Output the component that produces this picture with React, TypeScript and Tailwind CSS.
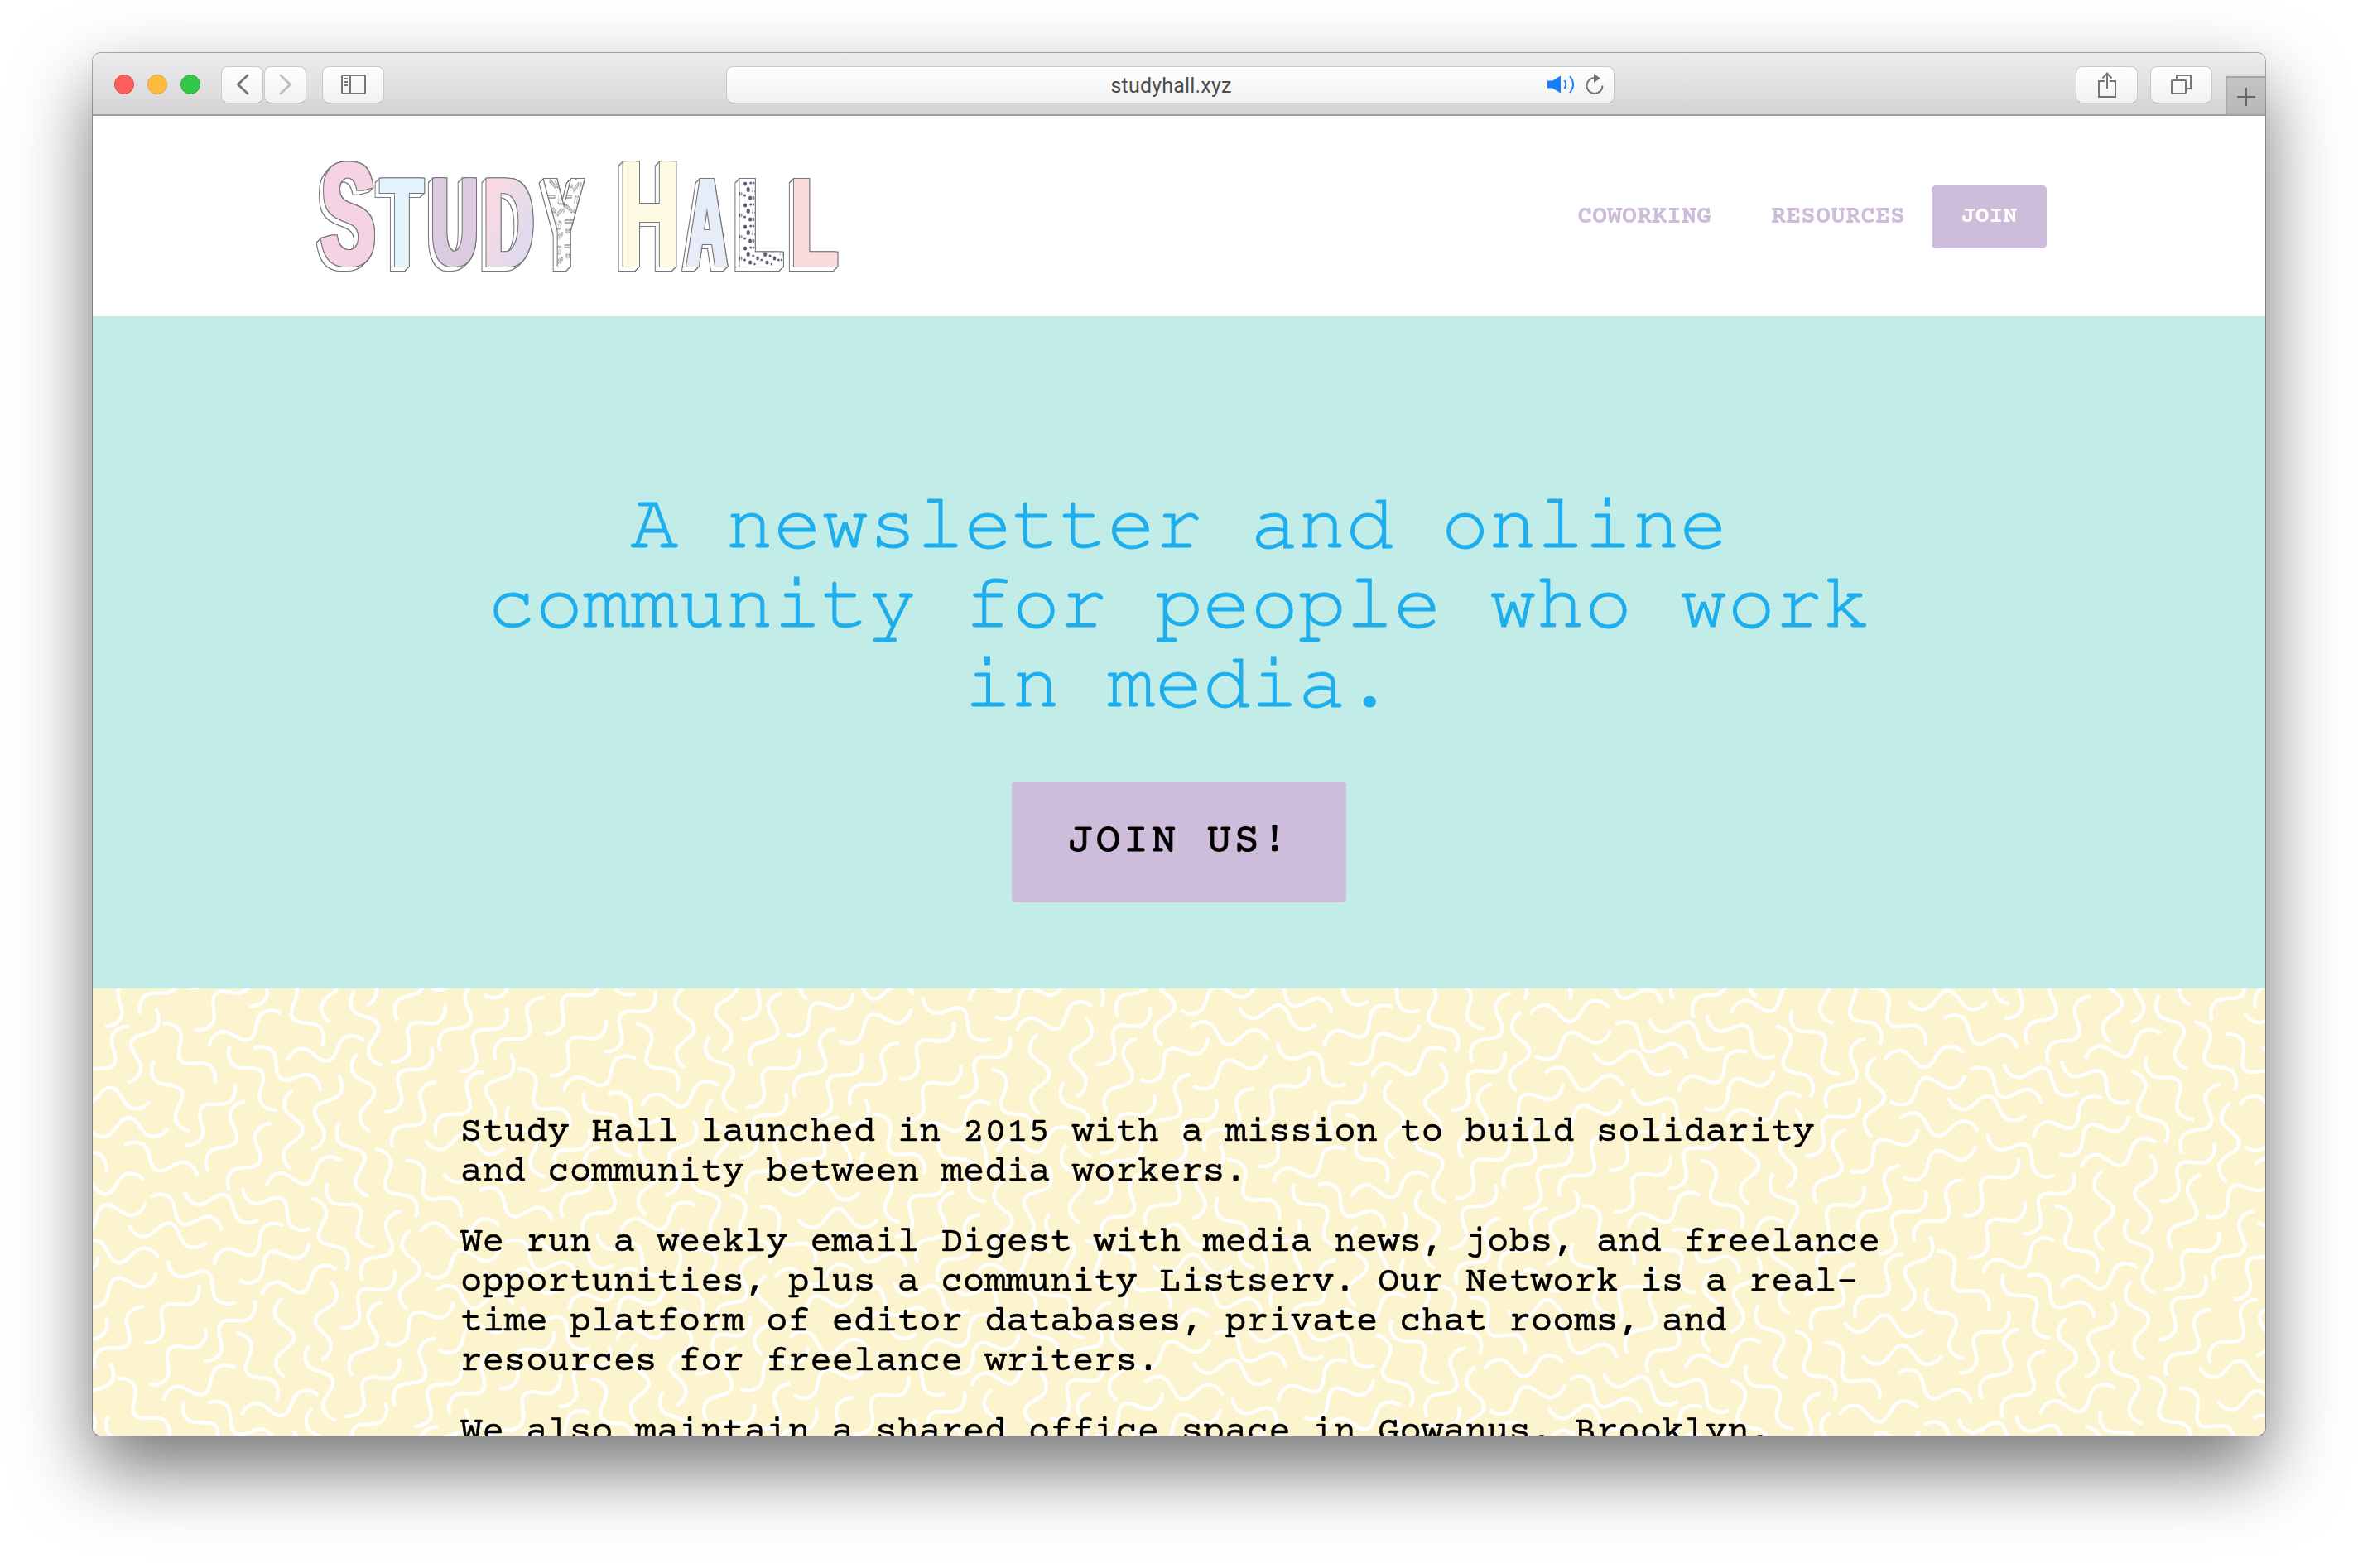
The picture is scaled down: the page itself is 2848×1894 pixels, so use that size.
import React from "react";

type Squiggle = [number, number, number, number];

/* Each entry is the chord of one squiggle: start x, y and end x, y. */
const CHORDS: Squiggle[] = [
  [292, 83, 562, 83], [660, 243, 415, 140], [350, 228, 165, 40], [1397, 384, 1262, 153],
  [480, 258, 215, 280], [150, 210, 20, 443], [183, 273, 170, 540], [233, 420, 485, 333],
  [530, 523, 265, 480], [743, 430, 503, 315], [617, 295, 868, 390], [813, 283, 1042, 421],
  [430, 410, 690, 468], [950, 410, 717, 543], [803, 598, 1040, 470], [560, 530, 790, 671],
  [98, 655, 325, 515], [275, 677, 522, 570], [1147, 192, 893, 277], [1132, 560, 878, 645],
  [910, 66, 768, 292], [668, 1190, 543, 1428], [829, 1155, 824, 1420], [891, 1355, 984, 1102],
  [1143, 63, 1240, 311], [1100, 268, 1260, 482], [1163, 562, 1047, 320], [1349, 364, 1220, 598],
  [1383, 427, 1370, 693], [1080, 868, 1110, 600], [1145, 758, 1328, 562], [1283, 671, 1185, 918],
  [948, 658, 955, 923], [480, 808, 666, 612], [480, 687, 315, 895], [265, 638, 130, 868],
  [1160, 1056, 1343, 861], [193, 938, 352, 720], [682, 868, 853, 665], [498, 948, 688, 760],
  [928, 1004, 790, 774], [788, 893, 547, 1003], [1070, 985, 810, 1052], [1037, 818, 1130, 1070],
  [270, 1127, 365, 877], [565, 1130, 390, 927], [275, 938, 115, 1152], [1315, 1126, 1168, 1348],
  [360, 1055, 482, 1291], [615, 1005, 775, 1221], [922, 1155, 697, 1012], [1048, 1030, 1092, 1293],
  [1140, 1227, 1297, 1010], [1465, 793, 1330, 1023], [1475, 1092, 1315, 1306], [78, 1168, 345, 1193],
  [138, 1283, 407, 1281], [195, 1427, 8, 1238], [465, 1340, 632, 1130], [507, 1445, 260, 1340],
  [327, 1458, 60, 1478], [993, 1392, 740, 1478], [990, 1262, 1088, 1510],
];

const UNIT = 2.8;
const STEP_X = 428.5;
const STEP_Y = 55;
const SPAN = STEP_X * STEP_X + STEP_Y * STEP_Y;

const fold = (v: number) => v - Math.round(v);

const TILE = CHORDS.map(([x1, y1, x2, y2]) => {
  const ax = 2088 + x1 / UNIT;
  const ay = y1 / UNIT - 14;
  const bx = 2088 + x2 / UNIT;
  const by = y2 / UNIT - 14;
  const cx = (ax + bx) / 2;
  const cy = (ay + by) / 2;
  return {
    cx,
    cy,
    angle: (Math.atan2(by - ay, bx - ax) * 180) / Math.PI,
    u: (cx * STEP_X + cy * STEP_Y) / SPAN,
    v: (-cx * STEP_Y + cy * STEP_X) / SPAN,
  };
}).filter(
  (s, i, all) =>
    !all.slice(0, i).some((o) => Math.hypot(fold(o.u - s.u), fold(o.v - s.v)) < 0.035),
);

function Squiggles() {
  const marks: React.ReactNode[] = [];
  for (let i = -7; i <= 3; i++) {
    for (let j = -4; j <= 4; j++) {
      TILE.forEach((s, k) => {
        const x = s.cx + i * STEP_X - j * STEP_Y;
        const y = s.cy + i * STEP_Y + j * STEP_X;
        if (x < -60 || x > 2690 || y < -60 || y > 600) return;
        marks.push(
          <use
            key={`${i}.${j}.${k}`}
            href="#squiggle"
            transform={`translate(${x.toFixed(1)} ${y.toFixed(1)}) rotate(${s.angle.toFixed(1)})`}
          />,
        );
      });
    }
  }
  return (
    <svg className="absolute inset-0 h-full w-full" viewBox="0 0 2624 540" aria-hidden="true">
      <defs>
        <path
          id="squiggle"
          d="M-47.7 0C-43.5 6-37 9.8-30 9.8C-16 9.8-12.500-12.9 0-12.900C12.500-12.900 16 9.800 30 9.800C37 9.800 43.500 6 47.700 0"
          fill="none"
          stroke="#fff"
          strokeWidth="4.300"
        />
      </defs>
      {marks}
    </svg>
  );
}

const LETTERS = [
  { ch: "S", x: 420, y: 320, size: 178, sx: 0.555, fill: "#f6d3e4" },
  { ch: "T", x: 485, y: 322, size: 154, sx: 0.535, fill: "#e2f3fc" },
  { ch: "U", x: 548.5, y: 321, size: 152, sx: 0.515, fill: "#dccae1" },
  { ch: "D", x: 614, y: 322, size: 154, sx: 0.54, fill: "url(#dFill)" },
  { ch: "Y", x: 680.5, y: 322, size: 154, sx: 0.45, fill: "url(#sprinkles)" },
  { ch: "H", x: 784, y: 322, size: 184.5, sx: 0.54, fill: "#fefae3" },
  { ch: "A", x: 853.5, y: 322, size: 154, sx: 0.43, fill: "#e6edf8" },
  { ch: "L", x: 917.5, y: 322, size: 154, sx: 0.6, fill: "url(#terrazzo)" },
  { ch: "L", x: 983, y: 322, size: 154, sx: 0.6, fill: "#fadadd" },
];

function Logo() {
  return (
    <svg className="h-[242px] w-[660px]" viewBox="370 140 660 242" role="img" aria-label="Study Hall">
      <defs>
        <linearGradient id="dFill" x1="0" y1="0" x2="1" y2="1">
          <stop offset="0.2" stopColor="#fbd9e3" />
          <stop offset="0.9" stopColor="#d9dbf0" />
        </linearGradient>
        <pattern id="sprinkles" width="44" height="30" patternUnits="userSpaceOnUse">
          <rect width="44" height="30" fill="#fff" />
          <g fill="#fff" stroke="#777" strokeWidth="1.200">
            <rect x="4" y="4" width="18" height="3" />
            <rect x="30" y="5" width="6" height="9" transform="rotate(20 32 12)" />
            <rect x="6" y="18" width="18" height="3" transform="rotate(25 14 21)" />
            <rect x="26" y="22" width="16" height="3" transform="rotate(-30 35 23)" />
          </g>
        </pattern>
        <pattern id="terrazzo" width="34" height="26" patternUnits="userSpaceOnUse">
          <rect width="34" height="26" fill="#fff" />
          <g fill="#5b5872">
            <ellipse cx="5" cy="4" rx="3.500" ry="2.500" />
            <ellipse cx="16" cy="3" rx="2.500" ry="1.500" />
            <ellipse cx="27" cy="6" rx="3.500" ry="2.500" />
            <ellipse cx="11" cy="11" rx="3.500" ry="3" />
            <ellipse cx="21" cy="13" rx="2.500" ry="1.500" />
            <ellipse cx="30" cy="16" rx="3" ry="2.500" />
            <ellipse cx="4" cy="18" rx="2.500" ry="1.500" />
            <ellipse cx="15" cy="21" rx="3.500" ry="2.500" />
            <ellipse cx="24" cy="23" rx="2" ry="1.500" />
          </g>
        </pattern>
        <filter id="extrude" x="370" y="140" width="660" height="242" filterUnits="userSpaceOnUse" colorInterpolationFilters="sRGB">
          <feOffset in="SourceGraphic" dx="-2.500" dy="0" result="wideLeft" />
          <feOffset in="SourceGraphic" dx="2.500" dy="0" result="wideRight" />
          <feMerge result="face">
            <feMergeNode in="wideLeft" />
            <feMergeNode in="wideRight" />
            <feMergeNode in="SourceGraphic" />
          </feMerge>
          <feOffset in="face" dx="-1" dy="1" result="a" />
          <feOffset in="face" dx="-2" dy="2" result="b" />
          <feOffset in="face" dx="-3" dy="3" result="c" />
          <feOffset in="face" dx="-4" dy="4" result="d" />
          <feOffset in="face" dx="-5" dy="5" result="e" />
          <feMerge result="body">
            <feMergeNode in="face" />
            <feMergeNode in="a" />
            <feMergeNode in="b" />
            <feMergeNode in="c" />
            <feMergeNode in="d" />
            <feMergeNode in="e" />
          </feMerge>
          <feMorphology in="body" operator="dilate" radius="1" result="bodyWide" />
          <feMorphology in="face" operator="dilate" radius="1" result="faceWide" />
          <feFlood floodColor="#777" result="ink" />
          <feComposite in="ink" in2="bodyWide" operator="in" result="bodyLine" />
          <feComposite in="ink" in2="faceWide" operator="in" result="faceLine" />
          <feFlood floodColor="#fff" result="paper" />
          <feComposite in="paper" in2="body" operator="in" result="side" />
          <feMerge>
            <feMergeNode in="bodyLine" />
            <feMergeNode in="side" />
            <feMergeNode in="faceLine" />
            <feMergeNode in="face" />
          </feMerge>
        </filter>
      </defs>
      <g filter="url(#extrude)" className="font-['Liberation_Sans',sans-serif] font-bold" textAnchor="middle">
        {LETTERS.map((l, i) => (
          <text key={i} transform={`translate(${l.x} ${l.y}) scale(${l.sx} 1)`} fontSize={l.size} fill={l.fill}>
            {l.ch}
          </text>
        ))}
      </g>
    </svg>
  );
}

const BUTTON =
  "flex h-[45px] items-center justify-center rounded-[8px] border border-[#cbc9cc] border-b-[#a9a7aa] bg-linear-to-b from-white to-[#f1f1f1]";

function Toolbar() {
  return (
    <div className="relative flex h-[76px] shrink-0 items-start border-b-2 border-[#a09ea1] bg-linear-to-b from-[#eeecef] to-[#d5d3d6] pt-[15.500px] pl-[26px]">
      <div className="flex h-[45px] items-center gap-4">
        <div className="size-6 rounded-full border border-[#e0443e] bg-[#fc615d]" />
        <div className="size-6 rounded-full border border-[#dea034] bg-[#fdbc40]" />
        <div className="size-6 rounded-full border border-[#27aa35] bg-[#34c84a]" />
      </div>
      <div className="ml-[25px] flex gap-px">
        <div className={`${BUTTON} w-[51px]`}>
          <svg className="h-[26px] w-4" viewBox="0 0 16 26" fill="none" stroke="#757575" strokeWidth="2.800" strokeLinecap="round">
            <path d="M14 2L2.500 13L14 24" />
          </svg>
        </div>
        <div className={`${BUTTON} w-[51px]`}>
          <svg className="h-[26px] w-4" viewBox="0 0 16 26" fill="none" stroke="#bdbdbd" strokeWidth="2.800" strokeLinecap="round">
            <path d="M2 2L13.500 13L2 24" />
          </svg>
        </div>
      </div>
      <div className={`${BUTTON} ml-[19px] w-[75px]`}>
        <svg className="h-6 w-[30px]" viewBox="0 0 30 24" fill="none" stroke="#757575" strokeWidth="2">
          <rect x="1" y="1" width="28" height="22" rx="1" />
          <path d="M11 1V23M4 5H8M4 9H8M4 13H8" />
        </svg>
      </div>
      <div className={`${BUTTON} relative ml-[413px] w-[1073px]`}>
        <span className="pt-0.5 pl-0.5 font-['Roboto',sans-serif] text-[25px] leading-none tracking-[0.200px] text-[#4c4c4c]">
          studyhall.xyz
        </span>
        <div className="absolute top-0 right-[11px] flex h-full items-center gap-3">
          <svg className="h-[26px] w-[33px]" viewBox="0 0 33 26" fill="none" stroke="#157efb" strokeWidth="2">
            <path d="M0 8.500H6L16 2.500V23.500L6 17.500H0Z" fill="#157efb" stroke="none" />
            <path d="M20.500 8Q24 13 20.500 18M27 3Q35 13 27 23" />
          </svg>
          <svg className="h-[26px] w-6" viewBox="0 0 24 26" fill="none" stroke="#757575" strokeWidth="2">
            <path d="M12 5A9.500 9.500 0 1 0 21.500 14.500" />
            <path d="M11 0L19 5.500L11 11Z" fill="#757575" stroke="none" />
          </svg>
        </div>
      </div>
      <div className={`${BUTTON} ml-[557px] w-[75px]`}>
        <svg className="h-[31px] w-6" viewBox="0 0 24 31" fill="none" stroke="#757575" strokeWidth="2">
          <path d="M9 11H2V30H22V11H15M12 20V2M6.500 7.500L12 1.500L17.500 7.500" />
        </svg>
      </div>
      <div className={`${BUTTON} ml-[15px] w-[75px]`}>
        <svg className="h-6 w-[26px]" viewBox="0 0 26 24" fill="none" stroke="#757575" strokeWidth="2">
          <rect x="1" y="7" width="17" height="16" rx="1" />
          <path d="M7 5V1H24V17H20" />
        </svg>
      </div>
      <div className="absolute right-0 bottom-0 flex h-[46px] w-12 items-center justify-center border-t-2 border-l-2 border-[#a5a3a6] bg-linear-to-b from-[#c6c4c7] to-[#b8b6b9] pt-0.5">
        <svg className="size-[22px]" viewBox="0 0 22 22" stroke="#666" strokeWidth="2">
          <path d="M11 0V22M0 11H22" />
        </svg>
      </div>
    </div>
  );
}

export default function App() {
  return (
    <div className="flex h-[1894px] w-[2848px] justify-center overflow-hidden bg-white pt-16 font-['Courier_Prime','Liberation_Mono',monospace]">
      <div className="h-[1670px] w-[2624px] rounded-[10px] shadow-[0_0_0_1px_rgba(0,0,0,0.3),0_40px_90px_rgba(0,0,0,0.55)]">
        <div className="flex h-full w-full flex-col overflow-hidden rounded-[10px] bg-white">
          <Toolbar />
          <header className="flex h-[242px] shrink-0 items-start bg-white pl-[258px]">
            <Logo />
            <nav className="mt-[84px] ml-[875px] flex h-[76px] items-center text-[30px] font-bold text-[#cdbddb]">
              <a className="w-[234px]">COWORKING</a>
              <a className="w-[194px]">RESOURCES</a>
              <a className="flex h-[76px] w-[139px] items-center justify-center rounded-[5px] bg-[#cdbddb] text-[28px] text-white">
                JOIN
              </a>
            </nav>
          </header>
          <section className="flex h-[812px] shrink-0 flex-col items-center bg-[#c2ece7] pt-[202px]">
            <h1 className="text-center font-['FreeMono','Liberation_Mono',monospace] text-[96px] leading-[96px] whitespace-nowrap text-[#1eaeed] [-webkit-text-stroke:1px_#1eaeed]">
              A newsletter and online
              <br />
              community for people who work
              <br />
              in media.
            </h1>
            <a className="mt-[72px] flex h-[146px] w-[404px] items-center justify-center rounded-[5px] bg-[#cdbddb] text-[50px] tracking-[3.500px] whitespace-nowrap text-black [-webkit-text-stroke:1px_black]">
              JOIN US!
            </a>
          </section>
          <section className="relative h-[540px] shrink-0 overflow-hidden bg-[#fcf4cf]">
            <Squiggles />
            <div className="relative flex flex-col gap-[37px] pt-[151px] pl-[444px] text-[44px] leading-[48px] whitespace-nowrap text-black [-webkit-text-stroke:0.400px_black]">
              <p>
                Study Hall launched in 2015 with a mission to build solidarity
                <br />
                and community between media workers.
              </p>
              <p>
                We run a weekly email Digest with media news, jobs, and freelance
                <br />
                opportunities, plus a community Listserv. Our Network is a real-
                <br />
                time platform of editor databases, private chat rooms, and
                <br />
                resources for freelance writers.
              </p>
              <p>We also maintain a shared office space in Gowanus, Brooklyn,</p>
            </div>
          </section>
        </div>
      </div>
    </div>
  );
}
